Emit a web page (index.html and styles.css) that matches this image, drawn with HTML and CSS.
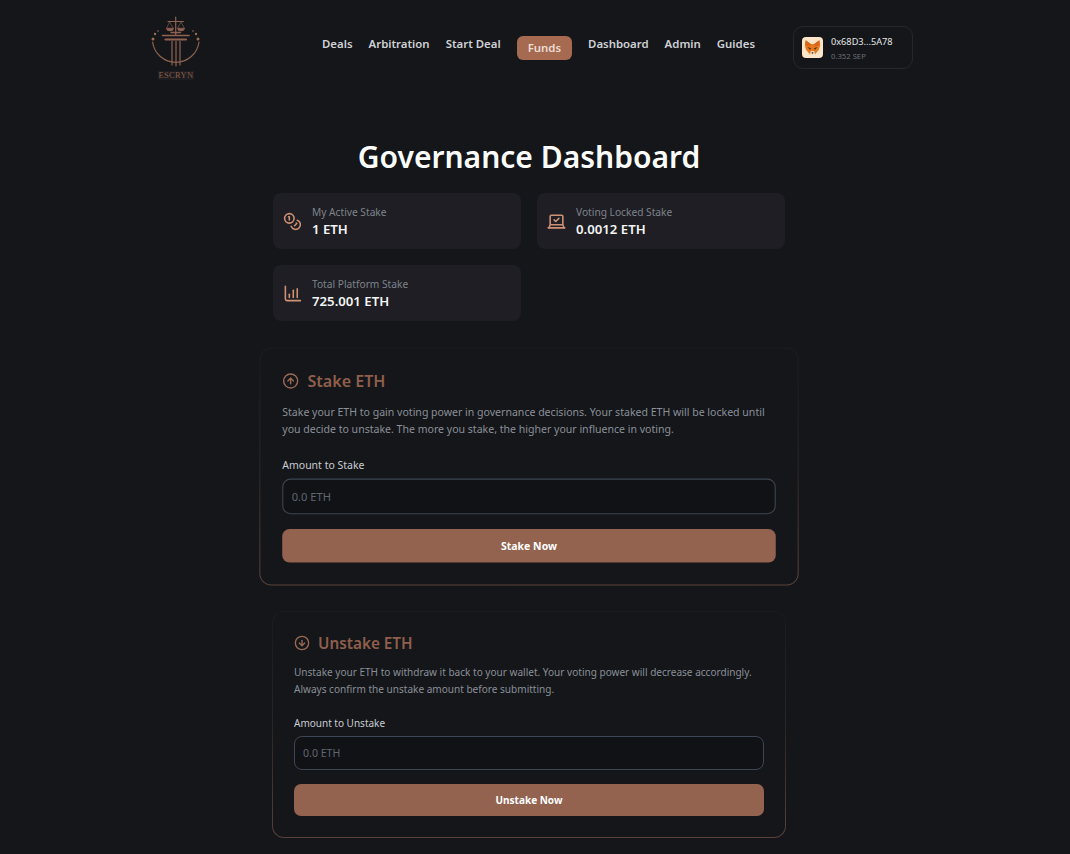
FILE: index.html
```html
<!DOCTYPE html>
<html lang="en">
<head>
<meta charset="utf-8">
<title>Governance Dashboard</title>
<link rel="stylesheet" href="styles.css">
</head>
<body>
<div class="page">
  <header class="topbar">
    <div class="logo">
      <svg class="logo-mark" width="52" height="54" viewBox="0 0 52 54" fill="none">
        <g stroke="#8f6350" stroke-linecap="round">
          <path d="M2.600 28 A23.400 23.400 0 0 0 49 28" stroke-width="1.200"/>
          <path d="M25.700 3v18" stroke-width="1.200"/>
          <path d="M18 7.500h15.500" stroke-width="1"/>
          <path d="M19.500 8 16.500 14.500h7L19.500 8ZM31 8l-3.500 6.500h7L31 8Z" stroke-width=".6"/>
          <path d="M16.500 14.500a3.500 2.500 0 0 0 7 0ZM27.500 14.500a3.500 2.500 0 0 0 7 0Z" fill="#8f6350" stroke-width=".5"/>
          <path d="M21 18.500h9.500" stroke-width="1.400"/>
          <path d="M12.500 21.500h26.500" stroke-width="1.600"/>
          <path d="M15.500 25.500h20.500" stroke-width="2.200"/>
          <path d="M22 27v24M26 27v25M30 27v24" stroke-width="1.200"/>
        </g>
        <g fill="#9a6c56">
          <circle cx="3" cy="25" r="1.500"/>
          <circle cx="5" cy="20" r="1.200"/>
          <circle cx="8" cy="17" r=".8"/>
          <circle cx="48" cy="25" r="1.500"/>
          <circle cx="46" cy="20" r="1.200"/>
          <circle cx="43" cy="17" r=".8"/>
        </g>
      </svg>
      <span class="logo-name">ESCRYN</span>
    </div>
    <nav class="nav">
      <a class="nav-link">Deals</a>
      <a class="nav-link">Arbitration</a>
      <a class="nav-link">Start Deal</a>
      <a class="nav-link nav-link-active">Funds</a>
      <a class="nav-link">Dashboard</a>
      <a class="nav-link">Admin</a>
      <a class="nav-link">Guides</a>
    </nav>
    <div class="wallet">
      <span class="wallet-icon">
        <svg width="17" height="17" viewBox="0 0 20 20">
          <path d="M2 1.500 8 6h4l6-4.500 1 6-1.500 5L13 18l-3-.8L7 18l-4.500-5L1 7.500Z" fill="#e8791f"/>
          <path d="M2 1.500 8 6 7 9 1.500 7Z" fill="#d9651a"/>
          <path d="M18 1.500 12 6l1 3 5.500-2Z" fill="#d9651a"/>
          <path d="M4 9.500 8.500 11 7 12.800ZM16 9.500 11.500 11 13 12.800Z" fill="#5b3a20"/>
          <path d="M8 14h4l1 4-3-.8-3 .8Z" fill="#f3d9bd"/>
          <path d="M8.800 15.500h2.400L10 17.500Z" fill="#33261c"/>
        </svg>
      </span>
      <div class="wallet-text">
        <span class="wallet-address">0x68D3...5A78</span>
        <span class="wallet-balance">0.352 SEP</span>
      </div>
    </div>
  </header>

  <main class="main">
    <h1 class="title">Governance Dashboard</h1>
    <section class="stats">
      <div class="stat">
        <svg class="stat-icon" viewBox="0 0 24 24"><circle cx="8" cy="8" r="6"/><path d="M18.090 10.370A6 6 0 1 1 10.340 18"/><path d="M7 6h1v4"/><path d="m16.710 13.880.7.71-2.820 2.820"/></svg>
        <div class="stat-text"><span class="stat-label">My Active Stake</span><span class="stat-value">1 ETH</span></div>
      </div>
      <div class="stat">
        <svg class="stat-icon" viewBox="0 0 24 24"><rect x="4" y="4" width="16" height="12" rx="1.500"/><path d="M1.500 20h21"/><path d="M2.500 20 4 16M21.500 20 20 16"/><path d="m9 10 2 2 4-4"/></svg>
        <div class="stat-text"><span class="stat-label">Voting Locked Stake</span><span class="stat-value">0.0012 ETH</span></div>
      </div>
      <div class="stat">
        <svg class="stat-icon" viewBox="0 0 24 24"><path d="M3 3v16a2 2 0 0 0 2 2h17"/><path d="M8 17v-4"/><path d="M13 17V8"/><path d="M18 17V6"/></svg>
        <div class="stat-text"><span class="stat-label">Total Platform Stake</span><span class="stat-value">725.001 ETH</span></div>
      </div>
    </section>

    <section class="card card-raised">
      <h2 class="card-title">
        <svg class="card-icon" viewBox="0 0 24 24"><circle cx="12" cy="12" r="10"/><path d="m16 12-4-4-4 4"/><path d="M12 16V8"/></svg>
        Stake ETH
      </h2>
      <p class="card-desc">Stake your ETH to gain voting power in governance decisions. Your staked ETH will be locked until you decide to unstake. The more you stake, the higher your influence in voting.</p>
      <label class="field-label" for="stake">Amount to Stake</label>
      <input class="field" id="stake" placeholder="0.0 ETH">
      <button class="action">Stake Now</button>
    </section>

    <section class="card">
      <h2 class="card-title">
        <svg class="card-icon" viewBox="0 0 24 24"><circle cx="12" cy="12" r="10"/><path d="m8 12 4 4 4-4"/><path d="M12 8v8"/></svg>
        Unstake ETH
      </h2>
      <p class="card-desc">Unstake your ETH to withdraw it back to your wallet. Your voting power will decrease accordingly. Always confirm the unstake amount before submitting.</p>
      <label class="field-label" for="unstake">Amount to Unstake</label>
      <input class="field" id="unstake" placeholder="0.0 ETH">
      <button class="action">Unstake Now</button>
    </section>
  </main>
</div>
</body>
</html>
```

FILE: styles.css
```css
* { box-sizing: border-box; }

html, body {
  margin: 0;
  background: #14161a;
}

body {
  font-family: "Noto Sans", "Open Sans", sans-serif;
  color: #fff;
}

.page {
  width: 1058px;
  height: 854px;
  overflow: hidden;
}

.topbar {
  display: flex;
  align-items: flex-start;
  height: 134px;
  padding: 14px 145px 0 150px;
}

.logo {
  display: flex;
  flex-direction: column;
  align-items: center;
  width: 52px;
}

.logo-mark { display: block; }

.logo-name {
  margin-top: 3px;
  padding: 0 1px;
  font-family: "Liberation Serif", serif;
  font-size: 8.500px;
  line-height: 9px;
  letter-spacing: .3px;
  color: #8a5f4b;
  background: #1d1c1e;
}

.nav {
  display: flex;
  align-items: flex-start;
  gap: 16px;
  margin: 22px 38px 0 auto;
}

.nav-link {
  font-size: 11.400px;
  line-height: 16px;
  font-weight: 600;
  color: #cfd1d5;
  white-space: nowrap;
}

.nav-link-active {
  padding: 4px 11px;
  border-radius: 6px;
  background: #a56a50;
  color: #ecdcd4;
}

.wallet {
  display: flex;
  align-items: center;
  gap: 8px;
  width: 120px;
  height: 43px;
  margin-top: 12px;
  padding-left: 8px;
  border: 1px solid #25272c;
  border-radius: 10px;
}

.wallet-icon {
  display: flex;
  align-items: center;
  justify-content: center;
  width: 21px;
  height: 21px;
  border-radius: 4px;
  background: #fce5c8;
}

.wallet-text {
  display: flex;
  flex-direction: column;
  gap: 3px;
  padding-top: 1px;
}

.wallet-address {
  font-size: 9.200px;
  line-height: 12px;
  color: #e5e6e8;
}

.wallet-balance {
  font-size: 7.700px;
  line-height: 10px;
  color: #6a6e76;
}

.main {
  width: 514px;
  margin: 0 auto;
}

.title {
  margin: 0 0 14px;
  font-size: 30px;
  line-height: 45px;
  font-weight: 600;
  text-align: center;
  white-space: nowrap;
}

.stats {
  display: grid;
  grid-template-columns: 248px 248px;
  gap: 16px;
  justify-content: center;
  margin-bottom: 32px;
}

.stat {
  display: flex;
  align-items: center;
  gap: 10px;
  height: 56px;
  padding-left: 10px;
  border-radius: 8px;
  background: #1e1e24;
}

.stat-icon {
  width: 19px;
  height: 19px;
  fill: none;
  stroke: #cf9173;
  stroke-width: 2;
  stroke-linecap: round;
  stroke-linejoin: round;
}

.stat-text {
  display: flex;
  flex-direction: column;
}

.stat-label {
  font-size: 10.200px;
  line-height: 16px;
  color: #7f838b;
}

.stat-value {
  font-size: 13.200px;
  line-height: 18px;
  font-weight: 600;
  color: #f4f4f5;
}

.card {
  height: 227px;
  margin-bottom: 31px;
  padding: 21px;
  border: 1px solid transparent;
  border-radius: 12px;
  background:
    linear-gradient(#14161a, #14161a) padding-box,
    linear-gradient(180deg, #191b1f 0%, #2a2523 50%, #5a4036 100%) border-box;
}

.card-raised { transform: scale(1.05); }

.card-title {
  display: flex;
  align-items: center;
  gap: 8px;
  height: 20px;
  margin: 0 0 11px;
  font-size: 15.300px;
  font-weight: 600;
  color: #8f5f4b;
}

.card-icon {
  width: 16px;
  height: 16px;
  fill: none;
  stroke: #9c6a54;
  stroke-width: 2;
  stroke-linecap: round;
  stroke-linejoin: round;
}

.card-desc {
  margin: 0 0 17px;
  font-size: 10.060px;
  line-height: 17px;
  color: #8b8f97;
}

.field-label {
  display: block;
  margin-bottom: 5px;
  font-size: 10px;
  line-height: 16px;
  color: #c9cbd0;
}

.field {
  display: block;
  width: 100%;
  height: 34.400px;
  padding: 0 8px;
  border: 1px solid #3d4654;
  border-radius: 8px;
  outline: none;
  background: #111216;
  font-family: inherit;
  font-size: 10.600px;
  color: #fff;
}

.field::placeholder { color: #5f6672; }

.action {
  display: block;
  width: 100%;
  height: 31.900px;
  margin-top: 13.300px;
  border: 0;
  border-radius: 7px;
  background: #946350;
  font-family: inherit;
  font-size: 10px;
  font-weight: 700;
  color: #fff;
}
```
